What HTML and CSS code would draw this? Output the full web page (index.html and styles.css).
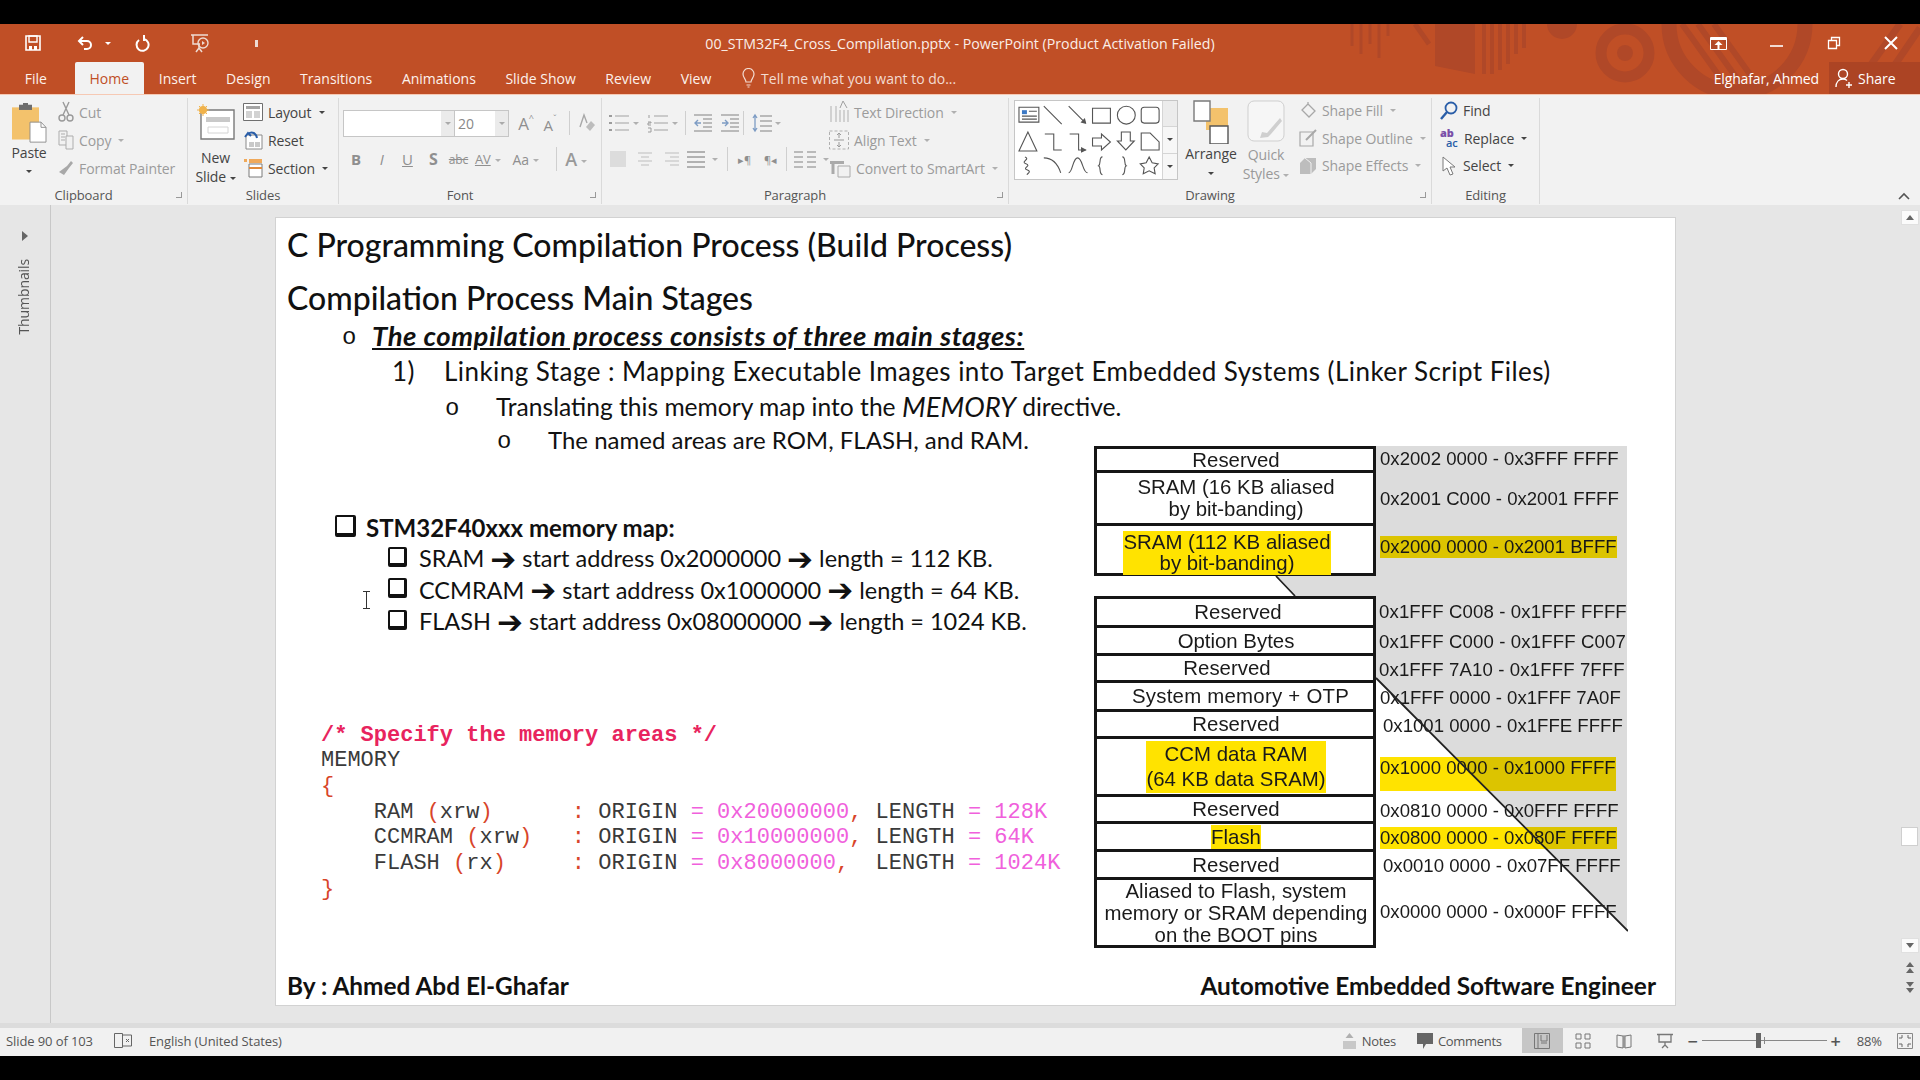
FILE: index.html
```html
<!DOCTYPE html>
<html lang="en">
<head>
    <meta charset="UTF-8">
    <title>00_STM32F4_Cross_Compilation.pptx - PowerPoint</title>
    <link rel="stylesheet" href="styles.css">
</head>
<body>
<div class="pp-window">

    <!-- title bar -->
    <header class="pp-head">
        <svg class="pp-decor" width="590" height="70" viewBox="0 0 590 70" fill="none">
            <g stroke="#b04828">
                <path d="M22 0v22M31 0v30M40 0v20M49 0v34M58 0v12" stroke-width="3"/>
                <path d="M85 0l14 20" stroke-width="5"/>
                <path d="M105 0h40v50l-40-8z" fill="#b04828" stroke="none"/>
                <path d="M154 0v50M162 0v50M170 0v46M178 0v40M186 0v30M194 0v24" stroke-width="4"/>
                <circle cx="232" cy="0" r="15" fill="#b04828" stroke="none"/>
                <circle cx="295" cy="29" r="24" stroke-width="11"/>
                <circle cx="295" cy="29" r="8" fill="#b04828" stroke="none"/>
                <circle cx="407" cy="0" r="68" stroke-width="15"/>
                <path d="M352 0l50 70M368 0l50 70M384 0l50 70" stroke-width="6"/>
                <path d="M520 70l50-70M545 70l45-66" stroke-width="7"/>
            </g>
        </svg>
        <div class="pp-titlebar">
            <div class="pp-qat">
                <svg class="q-save" width="16" height="16" viewBox="0 0 16 16"><path d="M1 1h14v14H1z" fill="none" stroke="#fff" stroke-width="1.6"/><path d="M4 1h8v6H4z" fill="none" stroke="#fff" stroke-width="1.4"/><path d="M4 11h3v4H4zM9 11h3v4H9z" fill="#fff"/></svg>
                <svg class="q-undo" width="18" height="16" viewBox="0 0 18 16"><path d="M6 2L2 6l4 4M2 6h8a4 4 0 0 1 0 8H7" fill="none" stroke="#fff" stroke-width="2"/></svg>
                <i class="caret caret-white q-caret"></i>
                <svg class="q-redo" width="16" height="18" viewBox="0 0 16 18"><path d="M9 5A6 6 0 1 1 4 6M9 1v5h-1" fill="none" stroke="#fff" stroke-width="2"/></svg>
                <svg class="q-show" width="20" height="20" viewBox="0 0 20 20"><path d="M1 2h17M3 2v9h7M9 11v4M6 19l3-4 3 4" fill="none" stroke="#eedbd2" stroke-width="1.5"/><circle cx="13" cy="10" r="5" fill="none" stroke="#eedbd2" stroke-width="1.4"/><path d="M12 8l3 2-3 2z" fill="#eedbd2"/></svg>
                <i class="q-custom"></i>
            </div>
            <div class="pp-title">00_STM32F4_Cross_Compilation.pptx - PowerPoint (Product Activation Failed)</div>
            <div class="pp-wincontrols">
                <svg width="17" height="13" viewBox="0 0 17 13"><path d="M.5.5h16v12H.5z" fill="none" stroke="#fff"/><path d="M1 1h15v2H1zM8.500 4l4 4h-3v4h-2V8h-3z" fill="#fff"/></svg>
                <svg width="14" height="14" viewBox="0 0 14 14"><path d="M0 10h13" stroke="#fff" stroke-width="1.6"/></svg>
                <svg width="14" height="14" viewBox="0 0 14 14"><path d="M1.500 4.500h8v8h-8zM4.500 4V1.500h8v8H10" fill="none" stroke="#fff" stroke-width="1.300"/></svg>
                <svg width="14" height="14" viewBox="0 0 14 14"><path d="M1 1l12 12M13 1L1 13" stroke="#fff" stroke-width="2"/></svg>
            </div>
        </div>
        <nav class="pp-tabs">
            <span class="tab tab-file">File</span>
            <span class="tab tab-active">Home</span>
            <span class="tab">Insert</span>
            <span class="tab">Design</span>
            <span class="tab">Transitions</span>
            <span class="tab">Animations</span>
            <span class="tab">Slide Show</span>
            <span class="tab">Review</span>
            <span class="tab">View</span>
            <span class="tab tab-tell">
                <svg width="13" height="20" viewBox="0 0 13 20"><path d="M4 14c0-3-3-4-3-8a5.500 5.500 0 0 1 11 0c0 4-3 5-3 8zM4.500 17h4M5.500 19h2" fill="none" stroke="#f3dcd2" stroke-width="1.200"/></svg>
                Tell me what you want to do...
            </span>
            <span class="tab-user">Elghafar, Ahmed</span>
            <span class="tab-share">
                <svg width="18" height="20" viewBox="0 0 18 20"><circle cx="8" cy="6" r="4.500" fill="none" stroke="#fff" stroke-width="1.400"/><path d="M1 19c0-5 3-8 7-8 2 0 3 .5 4 1.500M11 17h6M14 14v6" fill="none" stroke="#fff" stroke-width="1.400"/></svg>
                Share
            </span>
        </nav>
    </header>

    <!-- ribbon -->
    <section class="pp-ribbon">
        <div class="group group-clipboard">
            <div class="group-body">
                <div class="bigbtn bigbtn-paste">
                    <svg width="36" height="40" viewBox="0 0 36 46" preserveAspectRatio="none"><path d="M1 5h27v37H1z" fill="#f3c26c"/><path d="M8 2h13v6H8z" fill="#6d6d6d"/><path d="M12 0h5v3h-5z" fill="#6d6d6d"/><path d="M19 22h11l5 6v17H19z" fill="#fff" stroke="#8c8c8c"/><path d="M30 22v6h5" fill="none" stroke="#8c8c8c"/></svg>
                    <span>Paste</span>
                    <i class="caret caret-dark"></i>
                </div>
                <div class="stack stack-off">
                    <div class="small"><svg width="16" height="22" viewBox="0 0 16 22"><path d="M5 1l6 13M11 1L5 14" stroke="#9a9a9a" stroke-width="1.400" fill="none"/><circle cx="4" cy="17" r="3" fill="none" stroke="#9a9a9a" stroke-width="1.400"/><circle cx="12" cy="17" r="3" fill="none" stroke="#9a9a9a" stroke-width="1.400"/></svg>Cut</div>
                    <div class="small"><svg width="16" height="20" viewBox="0 0 16 20"><path d="M1 1h8v14H1zM3 4h4M3 7h4M3 10h4" fill="none" stroke="#adadad"/><path d="M8 6h7v13H8z" fill="#f1f1f1" stroke="#adadad"/></svg>Copy <i class="caret"></i></div>
                    <div class="small"><svg width="16" height="16" viewBox="0 0 16 16"><path d="M9 6l4-5 2 2-4 5zM9 6l2 2-5 7-5-3z" fill="#a8a8a8"/></svg>Format Painter</div>
                </div>
            </div>
            <div class="group-label group-label-dlg">Clipboard<i class="launcher"></i></div>
        </div>

        <div class="group group-slides">
            <div class="group-body">
                <div class="bigbtn bigbtn-new">
                    <svg width="38" height="36" viewBox="0 0 38 36"><path d="M4 6h33v29H4z" fill="#fff" stroke="#7a7a7a" stroke-width="1.400"/><path d="M9 13h24v5H9z" fill="#c9c9c9"/><path d="M11 23h20v6H11z" fill="none" stroke="#d4d4d4"/><circle cx="6" cy="6" r="4" fill="#f0b24a"/><path d="M6 0v12M0 6h12M2 2l8 8M10 2l-8 8" stroke="#f0b24a"/></svg>
                    <span>New</span>
                    <span>Slide <i class="caret caret-dark"></i></span>
                </div>
                <div class="stack">
                    <div class="small"><svg width="20" height="20" viewBox="0 0 20 20"><path d="M.5 1.500h19v17H.5z" fill="#fff" stroke="#6f6f6f"/><path d="M3 4h14v3H3z" fill="#a5a5a5"/><path d="M3 9h6v7H3zM11 9h6v7h-6z" fill="#d2d2d2"/></svg>Layout <i class="caret caret-dark"></i></div>
                    <div class="small"><svg width="20" height="20" viewBox="0 0 20 20"><path d="M3 5h16v14H3z" fill="#fff" stroke="#8a8a8a"/><path d="M6 12h5v5H6zM12 12h5v5h-5z" fill="#c9c9c9"/><path d="M2 7l3-4 3 3M5 4c4-3 8-1 9 4" fill="none" stroke="#2a5ea8" stroke-width="2"/></svg>Reset</div>
                    <div class="small"><svg width="20" height="20" viewBox="0 0 20 20"><path d="M6 6h13v13H6z" fill="#fff" stroke="#7a7a7a"/><path d="M6 1h13v4H6zM1 1h3v3H1z" fill="#f0a95a"/><path d="M6 10h13" stroke="#e08a3a" stroke-width="2"/></svg>Section <i class="caret caret-dark"></i></div>
                </div>
            </div>
            <div class="group-label">Slides</div>
        </div>

        <div class="group group-font">
            <div class="group-body group-rows">
                <div class="font-row font-row-top">
                    <div class="combo combo-name"><i class="combo-arrow"></i></div>
                    <div class="combo combo-size"><span>20</span><i class="combo-arrow"></i></div>
                    <span class="glyph g-big">A<small>^</small></span>
                    <span class="glyph g-small">A<small>ˇ</small></span>
                    <i class="rule"></i>
                    <svg width="18" height="20" viewBox="0 0 18 20"><path d="M2 14L6 2l3 8" fill="none" stroke="#a8a8a8" stroke-width="1.400"/><path d="M8 14l5-6 4 4-5 6z" fill="#bdbdbd"/></svg>
                </div>
                <div class="font-row font-row-bottom">
                    <b class="glyph">B</b><i class="glyph glyph-i">I</i><u class="glyph">U</u><b class="glyph glyph-s">S</b>
                    <s class="glyph glyph-abc">abc</s>
                    <span class="glyph glyph-av">AV<i class="caret"></i></span>
                    <span class="glyph glyph-aa">Aa<i class="caret"></i></span>
                    <i class="rule"></i>
                    <span class="glyph glyph-a">A<i class="caret"></i></span>
                </div>
            </div>
            <div class="group-label group-label-dlg">Font<i class="launcher"></i></div>
        </div>

        <div class="group group-para">
            <div class="group-body">
                <div class="para-icons">
                    <div class="para-row">
                        <svg class="pi" width="22" height="20" viewBox="0 0 22 20"><path d="M1 3h3M1 10h3M1 17h3" stroke="#9c9c9c" stroke-width="2"/><path d="M7 3h14M7 10h14M7 17h14" stroke="#bdbdbd" stroke-width="1.400"/></svg><i class="caret"></i>
                        <svg class="pi pi-gap" width="22" height="20" viewBox="0 0 22 20"><path d="M2 2v3M1 9h3v1H1v2h3M1 15h3v4H1" fill="none" stroke="#9c9c9c"/><path d="M7 3h14M7 10h14M7 17h14" stroke="#bdbdbd" stroke-width="1.400"/></svg><i class="caret"></i>
                        <i class="rule"></i>
                        <svg class="pi" width="20" height="18" viewBox="0 0 20 18"><path d="M1 1h18M10 5h9M10 9h9M10 13h9M1 17h18" stroke="#a8a8a8" stroke-width="1.300"/><path d="M8 9H2M5 6L2 9l3 3" fill="none" stroke="#7d9cc4" stroke-width="1.400"/></svg>
                        <svg class="pi pi-inc" width="20" height="18" viewBox="0 0 20 18"><path d="M1 1h18M10 5h9M10 9h9M10 13h9M1 17h18" stroke="#a8a8a8" stroke-width="1.300"/><path d="M2 9h6M5 6l3 3-3 3" fill="none" stroke="#7d9cc4" stroke-width="1.400"/></svg>
                        <i class="rule rule-tight"></i>
                        <svg class="pi" width="20" height="20" viewBox="0 0 20 20"><path d="M8 3h12M8 8h12M8 13h12M8 18h12" stroke="#a8a8a8" stroke-width="1.300"/><path d="M3 2v16M1 5l2-3 2 3M1 15l2 3 2-3" fill="none" stroke="#7d9cc4" stroke-width="1.300"/></svg><i class="caret"></i>
                    </div>
                    <div class="para-row para-row-2">
                        <svg class="pi" width="16" height="16" viewBox="0 0 16 16"><path d="M0 0h16v16H0z" fill="#dcdcdc"/></svg>
                        <svg class="pi pi-a2" width="14" height="16" viewBox="0 0 14 16"><path d="M0 2h14M3 6h8M0 10h14M3 14h8" stroke="#d0d0d0" stroke-width="1.500"/></svg>
                        <svg class="pi pi-a3" width="14" height="16" viewBox="0 0 14 16"><path d="M0 2h14M5 6h9M0 10h14M5 14h9" stroke="#d0d0d0" stroke-width="1.500"/></svg>
                        <svg class="pi pi-just" width="18" height="18" viewBox="0 0 18 18"><path d="M0 2h18M0 7h18M0 12h18M0 17h18" stroke="#9c9c9c" stroke-width="1.400"/></svg><i class="caret"></i>
                        <i class="rule"></i>
                        <span class="glyph glyph-para glyph-para-1">▸¶</span>
                        <span class="glyph glyph-para glyph-para-2">¶◂</span>
                        <i class="rule"></i>
                        <svg class="pi pi-cols" width="22" height="18" viewBox="0 0 22 18"><path d="M0 2h9M0 7h9M0 12h9M0 17h9M13 2h9M13 7h9M13 12h9M13 17h9" stroke="#a8a8a8" stroke-width="1.400"/></svg><i class="caret"></i>
                    </div>
                </div>
                <div class="stack stack-off stack-para">
                    <div class="small"><svg width="20" height="24" viewBox="0 0 20 24"><path d="M2 6v16M7 6v16M11 10v12M15 10v12M19 10v12" stroke="#b0b0b0"/><path d="M11 8l3-7 4 7" fill="none" stroke="#a0a0a0"/></svg>Text Direction <i class="caret"></i></div>
                    <div class="small"><svg width="20" height="20" viewBox="0 0 20 20"><path d="M.5 1h19v18H.5z" fill="none" stroke="#b0b0b0" stroke-dasharray="3 2"/><path d="M5 10h10M10 3v5M8 5l2-2 2 2M10 17v-5M8 15l2 2 2-2" fill="none" stroke="#9a9a9a"/></svg>Align Text <i class="caret"></i></div>
                    <div class="small"><svg width="22" height="20" viewBox="0 0 22 20"><path d="M1 3h14v3H1z" fill="#aaa"/><path d="M4 6v10" stroke="#aaa" stroke-width="3"/><path d="M9 8h12v11H9z" fill="#f1f1f1" stroke="#aaa"/></svg>Convert to SmartArt <i class="caret"></i></div>
                </div>
            </div>
            <div class="group-label group-label-dlg">Paragraph<i class="launcher"></i></div>
        </div>

        <div class="group group-drawing">
            <div class="group-body">
                <div class="gallery">
                    <svg width="148" height="78" viewBox="0 0 148 78" fill="none" stroke="#555" stroke-width="1.100">
                        <path d="M4 6h20v15H4z" fill="#fff"/><path d="M7 9h5v4H7z" fill="#3b78c4" stroke="none"/><path d="M14 10h8M7 15h15M7 18h15"/>
                        <path d="M29 5l18 18M54 5l17 17"/><path d="M71 22l-4-1 3-3z" fill="#555"/>
                        <path d="M78 7h18v15H78z"/><circle cx="112" cy="14" r="9"/><rect x="127" y="6" width="18" height="16" rx="3"/>
                        <path d="M13 31L4 50h18z"/>
                        <path d="M30 33h9v16h8M55 33h9v16h7"/><path d="M71 49l-4-2v4z" fill="#555"/>
                        <path d="M78 37h9v-4l9 8-9 8v-4h-9z"/><path d="M107 31h9v9h4l-8.500 9-8.500-9h4z"/><path d="M127 32h9l9 9v8h-18z"/>
                        <path d="M10 56c6 2-5 5 1 7s-4 4 1 6 1 3 0 5"/><path d="M29 57c8 0 14 6 17 15"/><path d="M54 72c4 0 4-15 9-15s5 15 10 15"/>
                        <path d="M88 56c-4 0-1 7-4 9 3 1 0 8 4 9M108 56c4 0 1 7 4 9-3 1 0 8-4 9"/>
                        <path d="M135 56l3 6 6 1-4 4 1 6-6-3-6 3 1-6-4-4 6-1z"/>
                    </svg>
                    <div class="gallery-arrows">
                        <span class="ga ga-off"></span>
                        <span class="ga"><i class="caret caret-dark"></i></span>
                        <span class="ga"><i class="caret caret-dark"></i></span>
                    </div>
                </div>
                <div class="bigbtn bigbtn-arrange">
                    <svg width="38" height="44" viewBox="0 0 38 44"><path d="M14 8h22v22H14z" fill="#f3c26c"/><path d="M2 1h16v20H2z" fill="#fff" stroke="#7a7a7a" stroke-width="1.400"/><path d="M18 26h18v18H18z" fill="#fff" stroke="#555" stroke-width="1.400"/></svg>
                    <span>Arrange</span>
                    <i class="caret caret-dark"></i>
                </div>
                <div class="bigbtn bigbtn-off bigbtn-quick">
                    <svg width="38" height="44" viewBox="0 0 38 44"><rect x="1" y="1" width="36" height="40" rx="6" fill="#f6f6f6" stroke="#cfcfcf"/><path d="M33 18L20 33l-5-1-2 6 8-1 3-3 11-13z" fill="#cfcfcf"/></svg>
                    <span>Quick</span>
                    <span>Styles <i class="caret"></i></span>
                </div>
                <div class="stack stack-off stack-shape">
                    <div class="small"><svg width="18" height="18" viewBox="0 0 18 18"><path d="M9 2l7 7-6 6-7-7zM9 2V0" fill="none" stroke="#a8a8a8" stroke-width="1.300"/></svg>Shape Fill <i class="caret"></i></div>
                    <div class="small"><svg width="18" height="18" viewBox="0 0 18 18"><path d="M1 3h13v14H1z" fill="none" stroke="#a8a8a8" stroke-width="1.200"/><path d="M7 11L17 1" stroke="#a8a8a8" stroke-width="2"/></svg>Shape Outline <i class="caret"></i></div>
                    <div class="small"><svg width="18" height="18" viewBox="0 0 18 18"><path d="M6 1h11v11l-5 5H1V6z" fill="#bdbdbd"/><path d="M6 1l6 5v11" fill="none" stroke="#f1f1f1"/></svg>Shape Effects <i class="caret"></i></div>
                </div>
            </div>
            <div class="group-label group-label-dlg">Drawing<i class="launcher"></i></div>
        </div>

        <div class="group group-editing">
            <div class="group-body">
                <div class="stack stack-edit">
                    <div class="small"><svg width="18" height="20" viewBox="0 0 18 20"><circle cx="11" cy="7" r="5.500" fill="none" stroke="#2a5ea8" stroke-width="1.800"/><path d="M7 11l-6 7" stroke="#2a5ea8" stroke-width="2.400"/></svg>Find</div>
                    <div class="small"><span class="ab"><b>ab</b><em>ac</em></span>Replace <i class="caret caret-dark caret-far"></i></div>
                    <div class="small"><svg width="18" height="20" viewBox="0 0 18 20"><path d="M3 1v14l4-3 3 7 3-1-3-7h5z" fill="#fff" stroke="#7a7a7a"/></svg>Select <i class="caret caret-dark"></i></div>
                </div>
            </div>
            <div class="group-label">Editing</div>
        </div>

        <svg class="ribbon-collapse" width="12" height="8" viewBox="0 0 12 8"><path d="M1 7l5-5 5 5" fill="none" stroke="#555" stroke-width="1.600"/></svg>
    </section>

    <!-- editing area -->
    <main class="pp-work">
        <aside class="pp-thumbs">
            <svg width="8" height="10" viewBox="0 0 8 10"><path d="M1 0l6 5-6 5z" fill="#666"/></svg>
            <span class="thumbs-label">Thumbnails</span>
        </aside>

        <div class="pp-stage">
            <article class="slide">
                <h1 class="s-h1">C Programming Compilation Process (Build Process)</h1>
                <h2 class="s-h2">Compilation Process Main Stages</h2>
                <p class="s-line s-b1"><span class="s-o">o</span><span class="s-lead">The compilation process consists of three main stages:</span></p>
                <p class="s-line s-b2"><span class="s-num">1)</span>Linking Stage : Mapping Executable Images into Target Embedded Systems (Linker Script Files)</p>
                <p class="s-line s-b3"><span class="s-o">o</span>Translating this memory map into the&nbsp;<span class="s-mem">MEMORY</span>&nbsp;directive.</p>
                <p class="s-line s-b4"><span class="s-o">o</span>The named areas are ROM, FLASH, and RAM.</p>

                <div class="s-body">
                    <div class="s-left">
                        <div class="mm-title"><i class="box"></i>STM32F40xxx memory map:</div>
                        <div class="mm-row"><i class="box box-small"></i>SRAM <span class="arrow">➔</span> start address 0x2000000 <span class="arrow">➔</span> length = 112 KB.</div>
                        <div class="mm-row"><i class="box box-small"></i>CCMRAM <span class="arrow">➔</span> start address 0x1000000 <span class="arrow">➔</span> length = 64 KB.</div>
                        <div class="mm-row"><i class="box box-small"></i>FLASH <span class="arrow">➔</span> start address 0x08000000 <span class="arrow">➔</span> length = 1024 KB.</div>
<pre class="code"><b class="c-comment">/* Specify the memory areas */</b>
MEMORY
<span class="c-red">{</span>
    RAM <span class="c-red">(</span>xrw<span class="c-red">)</span>      <span class="c-red">:</span> ORIGIN <span class="c-pink">=</span> <span class="c-pink">0x20000000</span><span class="c-red">,</span> LENGTH <span class="c-pink">=</span> <span class="c-pink">128K</span>
    CCMRAM <span class="c-red">(</span>xrw<span class="c-red">)</span>   <span class="c-red">:</span> ORIGIN <span class="c-pink">=</span> <span class="c-pink">0x10000000</span><span class="c-red">,</span> LENGTH <span class="c-pink">=</span> <span class="c-pink">64K</span>
    FLASH <span class="c-red">(</span>rx<span class="c-red">)</span>     <span class="c-red">:</span> ORIGIN <span class="c-pink">=</span> <span class="c-pink">0x8000000</span><span class="c-red">,</span>  LENGTH <span class="c-pink">=</span> <span class="c-pink">1024K</span>
<span class="c-red">}</span></pre>
                        <svg class="ibeam" width="9" height="18" viewBox="0 0 9 18"><path d="M1 .5h7M1 17.500h7M4.500 1v16" fill="none" stroke="#333"/></svg>
                    </div>

                    <div class="map">
                        <svg class="map-grey" width="534" height="502" viewBox="0 0 534 502"><path d="M282 0H533V484L282 232V150H201L182 130H282z" fill="#dcdcdc"/></svg>
                        <div class="map-group map-upper">
                            <div class="cell">Reserved</div><div class="addr">0x2002 0000 - 0x3FFF FFFF</div>
                            <div class="cell">SRAM (16 KB aliased<br>by bit-banding)</div><div class="addr">0x2001 C000 - 0x2001 FFFF</div>
                            <div class="cell cell-left cell-down"><span class="hl">SRAM (112 KB aliased<br>by bit-banding)</span></div><div class="addr addr-up"><span class="hl-addr">0x2000 0000 - 0x2001 BFFF</span></div>
                        </div>
                        <div class="map-group map-lower">
                            <div class="cell cell-plus">Reserved</div><div class="addr addr-tight">0x1FFF C008 - 0x1FFF FFFF</div>
                            <div class="cell">Option Bytes</div><div class="addr addr-tight">0x1FFF C000 - 0x1FFF C007</div>
                            <div class="cell cell-left">Reserved</div><div class="addr addr-tight">0x1FFF 7A10 - 0x1FFF 7FFF</div>
                            <div class="cell cell-sys">System memory + OTP</div><div class="addr">0x1FFF 0000 - 0x1FFF 7A0F</div>
                            <div class="cell">Reserved</div><div class="addr addr-in">0x1001 0000 - 0x1FFE FFFF</div>
                            <div class="cell cell-ccm"><span class="hl">CCM data RAM<br>(64 KB data SRAM)</span></div><div class="addr"><span class="hl-addr hl-tall">0x1000 0000 - 0x1000 FFFF</span></div>
                            <div class="cell">Reserved</div><div class="addr">0x0810 0000 - 0x0FFF FFFF</div>
                            <div class="cell"><span class="hl">Flash</span></div><div class="addr"><span class="hl-addr">0x0800 0000 - 0x080F FFFF</span></div>
                            <div class="cell">Reserved</div><div class="addr addr-in">0x0010 0000 - 0x07FF FFFF</div>
                            <div class="cell cell-wide">Aliased to Flash, system<br>memory or SRAM depending<br>on the BOOT pins</div><div class="addr addr-last">0x0000 0000 - 0x000F FFFF</div>
                        </div>
                        <svg class="map-lines" width="534" height="502" viewBox="0 0 534 502"><path d="M282 232L534 485M182 130L201 150" stroke="#222" stroke-width="1.800" fill="none"/></svg>
                    </div>
                </div>

                <footer class="s-foot">
                    <span>By : Ahmed Abd El-Ghafar</span>
                    <span>Automotive Embedded Software Engineer</span>
                </footer>
            </article>
        </div>

        <aside class="pp-scroll">
            <span class="sb-btn"><i class="tri-up"></i></span>
            <span class="sb-track"><span class="sb-thumb"></span></span>
            <span class="sb-btn"><i class="tri-down"></i></span>
            <span class="sb-page sb-page-first"><i class="tri-up"></i><i class="tri-up"></i></span>
            <span class="sb-page"><i class="tri-down"></i><i class="tri-down"></i></span>
        </aside>
    </main>

    <!-- status bar -->
    <footer class="pp-status">
        <span class="st-slide">Slide 90 of 103</span>
        <svg class="st-notes" width="18" height="15" viewBox="0 0 18 15"><path d="M.5.5h8v14h-8zM8.500 2h9v11h-9M12 6l3 3M15 6l-3 3" fill="none" stroke="#666"/></svg>
        <span class="st-lang">English (United States)</span>
        <span class="st-right">
            <svg width="13" height="16" viewBox="0 0 13 16"><path d="M0 8h13v8H0z" fill="#c8c8c8"/><path d="M6.500 0l4 5h-8z" fill="#b0b0b0"/></svg>
            <span class="st-notes-label">Notes</span>
            <svg width="16" height="16" viewBox="0 0 16 16"><path d="M0 0h16v11H9l-3 5v-5H0z" fill="#666"/></svg>
            <span class="st-comments">Comments</span>
            <span class="view view-on"><svg width="16" height="16" viewBox="0 0 16 16"><path d="M.5.5h15v15H.5zM4 1v14M7 10h6M7 2v6h6V2" fill="none" stroke="#777"/></svg></span>
            <span class="view"><svg width="16" height="16" viewBox="0 0 16 16"><path d="M1 1h5v5H1zM10 1h5v5h-5zM1 10h5v5H1zM10 10h5v5h-5z" fill="none" stroke="#777"/></svg></span>
            <span class="view"><svg width="16" height="16" viewBox="0 0 16 16"><path d="M1 2l6 1v12l-6-1zM15 2L9 3v12l6-1zM8 2v13" fill="none" stroke="#777"/></svg></span>
            <span class="view"><svg width="16" height="16" viewBox="0 0 16 16"><path d="M0 1.500h16M2 2v7h12V2M8 9v3M5 15l3-3 3 3" fill="none" stroke="#777" stroke-width="1.300"/></svg></span>
            <span class="zoom-sign">−</span>
            <span class="zoom-track"><i class="zoom-mid"></i><i class="zoom-thumb"></i></span>
            <span class="zoom-sign">+</span>
            <span class="zoom-pct">88%</span>
            <svg width="16" height="16" viewBox="0 0 16 16"><path d="M.5.5h15v15H.5z" fill="none" stroke="#888"/><path d="M5 2v3H2M11 2v3h3M5 14v-3H2M11 14v-3h3" fill="none" stroke="#666"/></svg>
        </span>
    </footer>
</div>
</body>
</html>
```

FILE: styles.css
```css
html, body {margin: 0; padding: 0; background: #000;}
body {font-family: "Open Sans", "Noto Sans", sans-serif; font-size: 14px; color: #444;}
p, h1, h2 {margin: 0;}
i {font-style: normal;}

.pp-window {width: 1920px; height: 1080px; padding: 24px 0; box-sizing: border-box; display: flex; flex-direction: column; overflow: hidden;}

/* title bar and tabs */
.pp-head {position: relative; height: 70px; background: #c04f26; color: #fff; flex: none;}
.pp-decor {position: absolute; left: 1330px; top: 0;}
.pp-titlebar {position: relative; height: 38px; display: flex; align-items: center;}
.pp-qat {width: 700px; display: flex; align-items: center; padding-left: 25px; box-sizing: border-box;}
.q-undo {margin-left: 36px;}
.q-caret {margin-left: 10px;}
.q-redo {margin-left: 24px;}
.q-show {margin-left: 39px;}
.q-custom {margin-left: 45px; width: 3px; height: 7px; background: #eedbd2;}
.pp-title {width: 520px; padding-top: 1px; text-align: center; white-space: nowrap; font-size: 14.200px; color: #fbeee8;}
.pp-wincontrols {margin-left: auto; display: flex; align-items: center; gap: 43px; padding-right: 22px;}

.pp-tabs {position: relative; height: 32px; display: flex; align-items: stretch; padding-left: 10px; font-size: 14px;}
.tab {padding: 0 14.800px; display: flex; align-items: center; color: #fdf2ec;}
.tab-file {margin-right: 13px;}
.tab-active {background: #f2f2f2; color: #c04f26; border-radius: 2px 2px 0 0;}
.tab-tell {gap: 6px; padding-left: 16px; color: #f3dcd2;}
.tab-user {margin-left: auto; align-self: center; letter-spacing: -.15px;}
.tab-share {margin-left: 10px; width: 91px; background: #ac4424; display: flex; align-items: center; gap: 5px; padding-left: 6px; box-sizing: border-box;}

/* ribbon */
.pp-ribbon {position: relative; height: 111px; background: #f2f2f2; border-top: 1px solid #f6c9b4; box-sizing: border-box; display: flex; flex: none; font-size: 14px; letter-spacing: -.1px;}
.group {position: relative; display: flex; flex-direction: column; box-sizing: border-box; border-right: 1px solid #dadada; margin: 3px 0 1px;}
.group-body {flex: 1; display: flex; min-height: 0;}
.group-label {position: relative; height: 17px; line-height: 17px; text-align: center; font-size: 13px; color: #555; letter-spacing: -.1px;}
.group-label-dlg {padding-right: 20px;}
.launcher {position: absolute; right: 5px; top: 5px; width: 5px; height: 5px; border-right: 1px solid #999; border-bottom: 1px solid #999;}

.group-clipboard {width: 188px;}
.group-slides {width: 151px;}
.group-font {width: 263px;}
.group-para {width: 407px;}
.group-drawing {width: 423px;}
.group-editing {width: 108px;}

.caret {display: inline-block; width: 0; height: 0; border: 3px solid transparent; border-top: 3px solid #b0b0b0; border-bottom: 0; vertical-align: middle;}
.caret-dark {border-top-color: #444;}
.caret-white {border-top-color: #fff;}
.small .caret-far {margin-left: 13px;}

.bigbtn {display: flex; flex-direction: column; align-items: center; line-height: 19px; flex: none;}
.bigbtn-off {color: #999;}
.bigbtn-paste {width: 58px; padding-top: 5px;}
.bigbtn-paste .caret {margin-top: 8px;}
.bigbtn-new {width: 55px; padding-top: 6px;}
.bigbtn-new svg {margin-bottom: 8px;}
.bigbtn-arrange {width: 60px; padding-top: 2px; margin-left: 3px;}
.bigbtn-arrange .caret {margin-top: 9px;}
.bigbtn-quick {width: 50px; padding-top: 2px;}
.bigbtn-quick svg {margin-bottom: 1px;}

.stack {display: flex; flex-direction: column; flex: none;}
.small {height: 28px; display: flex; align-items: center; gap: 3px; white-space: nowrap;}
.small svg {flex: none; margin-right: 2px;}
.small .caret {margin-left: 4px;}
.stack-off {color: #9b9b9b;}
.stack-para {margin-left: 23px;}
.stack-shape {margin: -1px 0 0 8px;}
.stack-edit {margin-top: -1px; padding-left: 8px;}
.stack-shape .small, .stack-edit .small {height: 27.500px;}

.group-rows {flex-direction: column;}
.font-row {display: flex; align-items: center; padding-left: 4px;}
.font-row-top {height: 30px; margin-top: 10px;}
.font-row-bottom {height: 30px; margin-top: 6px; padding-left: 4px;}
.combo {height: 27px; background: #fff; border: 1px solid #c6c6c6; box-sizing: border-box; position: relative; color: #888; font-size: 14px; line-height: 25px;}
.combo-name {width: 112px;}
.combo-size {width: 54px; border-left: 0; padding-left: 3px;}
.combo-arrow {position: absolute; right: 0; top: 0; bottom: 0; width: 13px; background: #ebebeb;}
.combo-arrow::after {content: ""; position: absolute; left: 4px; top: 11px; border: 3px solid transparent; border-top-color: #aaa; border-bottom: 0;}
.glyph {color: #8f8f8f; font-size: 15px; font-family: "Open Sans", sans-serif; font-style: normal; display: inline-block; text-align: center; white-space: nowrap;}
.glyph small {font-size: 9px; vertical-align: 9px;}
.g-big {font-size: 17px; margin-left: 6px; width: 22px;}
.g-small {font-size: 15px; margin-left: 2px; width: 22px;}
.font-row .rule {width: 1px; height: 24px; background: #cfcfcf; margin: 0 8px;}
.font-row-bottom .glyph {width: 26px;}
.glyph-i {font-style: italic;}
.glyph-s {font-size: 16px;}
.font-row-bottom .glyph-abc {font-size: 12px; width: 25px; text-decoration: line-through;}
.font-row-bottom .glyph-av {font-size: 13px; text-decoration: underline; width: 38px; margin-left: 4px; text-align: left;}
.font-row-bottom .glyph-aa {font-size: 14px; width: 36px; text-align: left;}
.font-row-bottom .glyph-a {font-size: 18px; width: 36px; text-align: left; font-weight: 600; color: #999;}
.glyph .caret {margin-left: 4px;}

.para-icons {width: 204px; padding-left: 6px; box-sizing: border-box; flex: none;}
.para-row {display: flex; align-items: center; height: 30px; margin-top: 10px; gap: 3px;}
.para-row > * {flex: none;}
.para-row-2 {margin-top: 6px; gap: 7px; padding-left: 2px;}
.para-row .rule {width: 1px; height: 24px; background: #cfcfcf; margin: 0 4px;}
.para-row .rule-tight {margin: 0 5px 0 0;}
.para-row-2 .rule {margin: 0 2px;}
.pi-gap {margin-left: 5px;}
.pi-inc {margin-left: 4px;}
.pi-a2 {margin-left: 5px;}
.pi-a3 {margin-left: 6px;}
.pi-just {margin-left: 1px;}
.pi-cols {margin-left: -2px;}
.glyph-para {font-size: 11px;}
.glyph-para-1 {margin-left: 1px;}
.glyph-para-2 {margin-left: 6px;}

.gallery {width: 164px; height: 80px; margin: 2px 0 0 5px; border: 1px solid #c6c6c6; background: #fff; box-sizing: border-box; display: flex; flex: none;}
.gallery-arrows {margin-left: auto; width: 14px; border-left: 1px solid #d5d5d5; display: flex; flex-direction: column; background: #f7f7f7;}
.ga {flex: 1; display: flex; align-items: center; justify-content: center; border-bottom: 1px solid #d5d5d5;}
.ga:last-child {border-bottom: 0;}
.ga-off {background: #ececec;}

.ab {font-size: 11px; line-height: 10px; width: 21px; flex: none; display: flex; flex-direction: column; font-weight: 600;}
.ab b {color: #7a4fa8;}
.ab em {color: #2a5ea8; font-style: normal; padding-left: 6px;}

.ribbon-collapse {position: absolute; right: 10px; bottom: 5px;}

/* work area */
.pp-work {flex: 1; min-height: 0; display: flex; background: #e6e6e6; border-bottom: 5px solid #dcdcdc;}
.pp-thumbs {width: 50px; flex: none; border-right: 1px solid #c8c8c8; display: flex; flex-direction: column; align-items: center; padding-top: 26px; box-sizing: content-box; font-size: 14px; color: #555;}
.thumbs-label {writing-mode: vertical-rl; transform: rotate(180deg); margin-top: 18px; margin-left: -3px; letter-spacing: -.1px;}
.pp-stage {flex: 1; padding: 13px 0 0 225px;}
.pp-scroll {width: 20px; flex: none; display: flex; flex-direction: column; align-items: center; padding: 5px 0 26px;}
.sb-btn {width: 18px; height: 15px; background: #fbfbfb; border: 1px solid #e0e0e0; box-sizing: border-box; display: flex; align-items: center; justify-content: center;}
.sb-track {flex: 1; width: 18px; display: flex; justify-content: center; position: relative;}
.sb-thumb {position: absolute; top: 602px; left: 0; width: 17px; height: 19px; background: #fff; border: 1px solid #cfcfcf; box-sizing: border-box;}
.sb-page {height: 19px; display: flex; flex-direction: column; align-items: center; justify-content: center; gap: 1px; margin-top: 1px;}
.sb-page-first {margin-top: 5px;}
.tri-up {width: 0; height: 0; border: 4px solid transparent; border-bottom: 5px solid #666; border-top: 0;}
.tri-down {width: 0; height: 0; border: 4px solid transparent; border-top: 5px solid #666; border-bottom: 0;}

/* slide */
.slide {width: 1399px; height: 787px; background: #fff; box-shadow: 0 0 0 1px #d2d2d2; display: flex; flex-direction: column; font-family: Lato, "Open Sans", sans-serif; color: #111; letter-spacing: 0;}
.s-h1 {font-size: 32px; line-height: 40px; margin: 7px 0 0 11px; font-weight: 500; white-space: nowrap;}
.s-h2 {font-size: 32px; line-height: 40px; margin: 13px 0 0 11px; font-weight: 500; white-space: nowrap;}
.s-line {font-size: 24px; white-space: nowrap; display: flex; align-items: center;}
.s-o {font-family: "Liberation Mono", monospace; font-size: 24px; flex: none; position: relative; top: 2px;}
.s-num {flex: none;}
.s-b1 {line-height: 34px; margin-top: 1px; padding-left: 66px;}
.s-b1 .s-o {width: 30px;}
.s-lead {font-size: 27.500px; font-weight: 700; font-style: italic; text-decoration: underline; letter-spacing: .55px;}
.s-b2 {line-height: 34px; margin-top: 1px; padding-left: 116px; font-size: 26px; letter-spacing: .45px;}
.s-b2 .s-num {width: 52px;}
.s-b3 {line-height: 34px; margin-top: 2px; padding-left: 169px; font-size: 24.600px;}
.s-b3 .s-o {width: 51px;}
.s-mem {font-style: italic; font-size: 27.500px;}
.s-b4 {line-height: 12px; margin-top: 10px; padding-left: 221px;}
.s-b4 .s-o {width: 51px;}

.s-body {display: flex; flex: none;}
.s-left {position: relative; width: 818px; flex: none; padding: 67px 0 0 59px; box-sizing: border-box;}
.mm-title {font-size: 24px; font-weight: 700; line-height: 30px; display: flex; align-items: center; white-space: pre;}
.mm-row {font-size: 23.500px; line-height: 31.500px; margin-left: 53px; display: flex; align-items: center; white-space: pre;}
.box {display: inline-block; width: 16px; height: 16px; border: 2px solid #111; border-radius: 2px; border-right-width: 3px; border-bottom-width: 4px; margin-right: 10px; flex: none; position: relative; top: -2px;}
.box-small {width: 14px; height: 14px; margin-right: 12px;}
.arrow {font-family: "DejaVu Sans", sans-serif; font-size: 31px; font-weight: 700; line-height: 28px;}
.code {position: relative; margin: 85px 0 0 -14px; font-family: "Liberation Mono", monospace; font-size: 22px; line-height: 25.700px; color: #3a3a3a;}
.c-comment {color: #e8245e;}
.c-red {color: #d8452a;}
.c-pink {color: #f060dc;}
.ibeam {position: absolute; left: 86px; top: 145px;}

.s-foot {margin-top: auto; height: 38px; padding: 0 19px 1px 11px; display: flex; justify-content: space-between; align-items: center; font-size: 24.400px; font-weight: 700; color: #111; white-space: nowrap;}

/* memory map diagram */
.map {position: relative; isolation: isolate; width: 534px; height: 502px; font-family: "Liberation Sans", Arial, sans-serif; color: #1a1a1a;}
.map-grey {position: absolute; left: 0; top: 0; z-index: -1;}
.map-lines {position: absolute; left: 0; top: 0; pointer-events: none;}
.map-group {display: grid; grid-template-columns: 282px 1fr;}
.map-upper {grid-template-rows: 27px 53px 50px;}
.map-lower {margin-top: 20px; grid-template-rows: 32px 28px 27px 29px 27px 58px 27px 28px 28px 68px;}
.cell {background: #fff; border: 3px solid #161616; border-top: 0; box-sizing: border-box; padding-left: 2px; font-size: 20.400px; line-height: 22px; text-align: center; display: flex; align-items: center; justify-content: center; white-space: nowrap;}
.map-group .cell:first-child {border-top: 3px solid #161616;}
.cell-left {padding: 0 16px 0 0;}
.cell-plus {padding-left: 6px;}
.cell-sys {padding-left: 11px; letter-spacing: .25px;}
.cell-down {padding-top: 7px; line-height: 21px;}
.cell-ccm {line-height: 25px;}
.addr {font-size: 18.600px; padding-left: 4px; display: flex; align-items: center; white-space: nowrap;}
.map-upper .addr {padding-bottom: 2px;}
.map-upper .addr-up {padding-bottom: 8px;}
.addr-tight {letter-spacing: .12px; padding-left: 3px;}
.addr-in {padding-left: 7px;}
.addr-last {padding-bottom: 5px;}
.hl {background: #ffe300; padding: 1px 0; -webkit-box-decoration-break: clone; box-decoration-break: clone;}
.hl-addr {background: #ffe300; mix-blend-mode: multiply; line-height: 22px; display: inline-block; align-self: center;}
.hl-tall {padding-bottom: 12px; position: relative; top: 6px;}

/* status bar */
.pp-status {height: 28px; padding-bottom: 3px; box-sizing: border-box; background: #f1f1f1; flex: none; display: flex; align-items: center; font-size: 13px; color: #555; letter-spacing: -.1px; position: relative;}
.st-slide {margin-left: 6px; width: 108px;}
.st-notes {margin-right: 17px;}
.st-right {margin-left: auto; display: flex; align-items: center; height: 25px;}
.st-notes-label {margin: 0 21px 0 6px; letter-spacing: -.3px;}
.st-comments {margin: 0 20px 0 5px; letter-spacing: -.3px;}
.view {width: 41px; height: 25px; display: flex; align-items: center; justify-content: center;}
.view-on {background: #c6c6c6;}
.zoom-sign {font-size: 18px; font-weight: 600; color: #555; width: 14px; text-align: center;}
.zoom-track {position: relative; width: 125px; height: 1px; background: #888; margin: 0 2px;}
.zoom-mid {position: absolute; left: 62px; top: -3px; width: 1px; height: 7px; background: #888;}
.zoom-thumb {position: absolute; left: 54px; top: -7px; width: 5px; height: 15px; background: #666;}
.zoom-pct {margin: 0 15px 0 14px;}
.st-right > svg:last-child {margin-right: 7px;}
```
